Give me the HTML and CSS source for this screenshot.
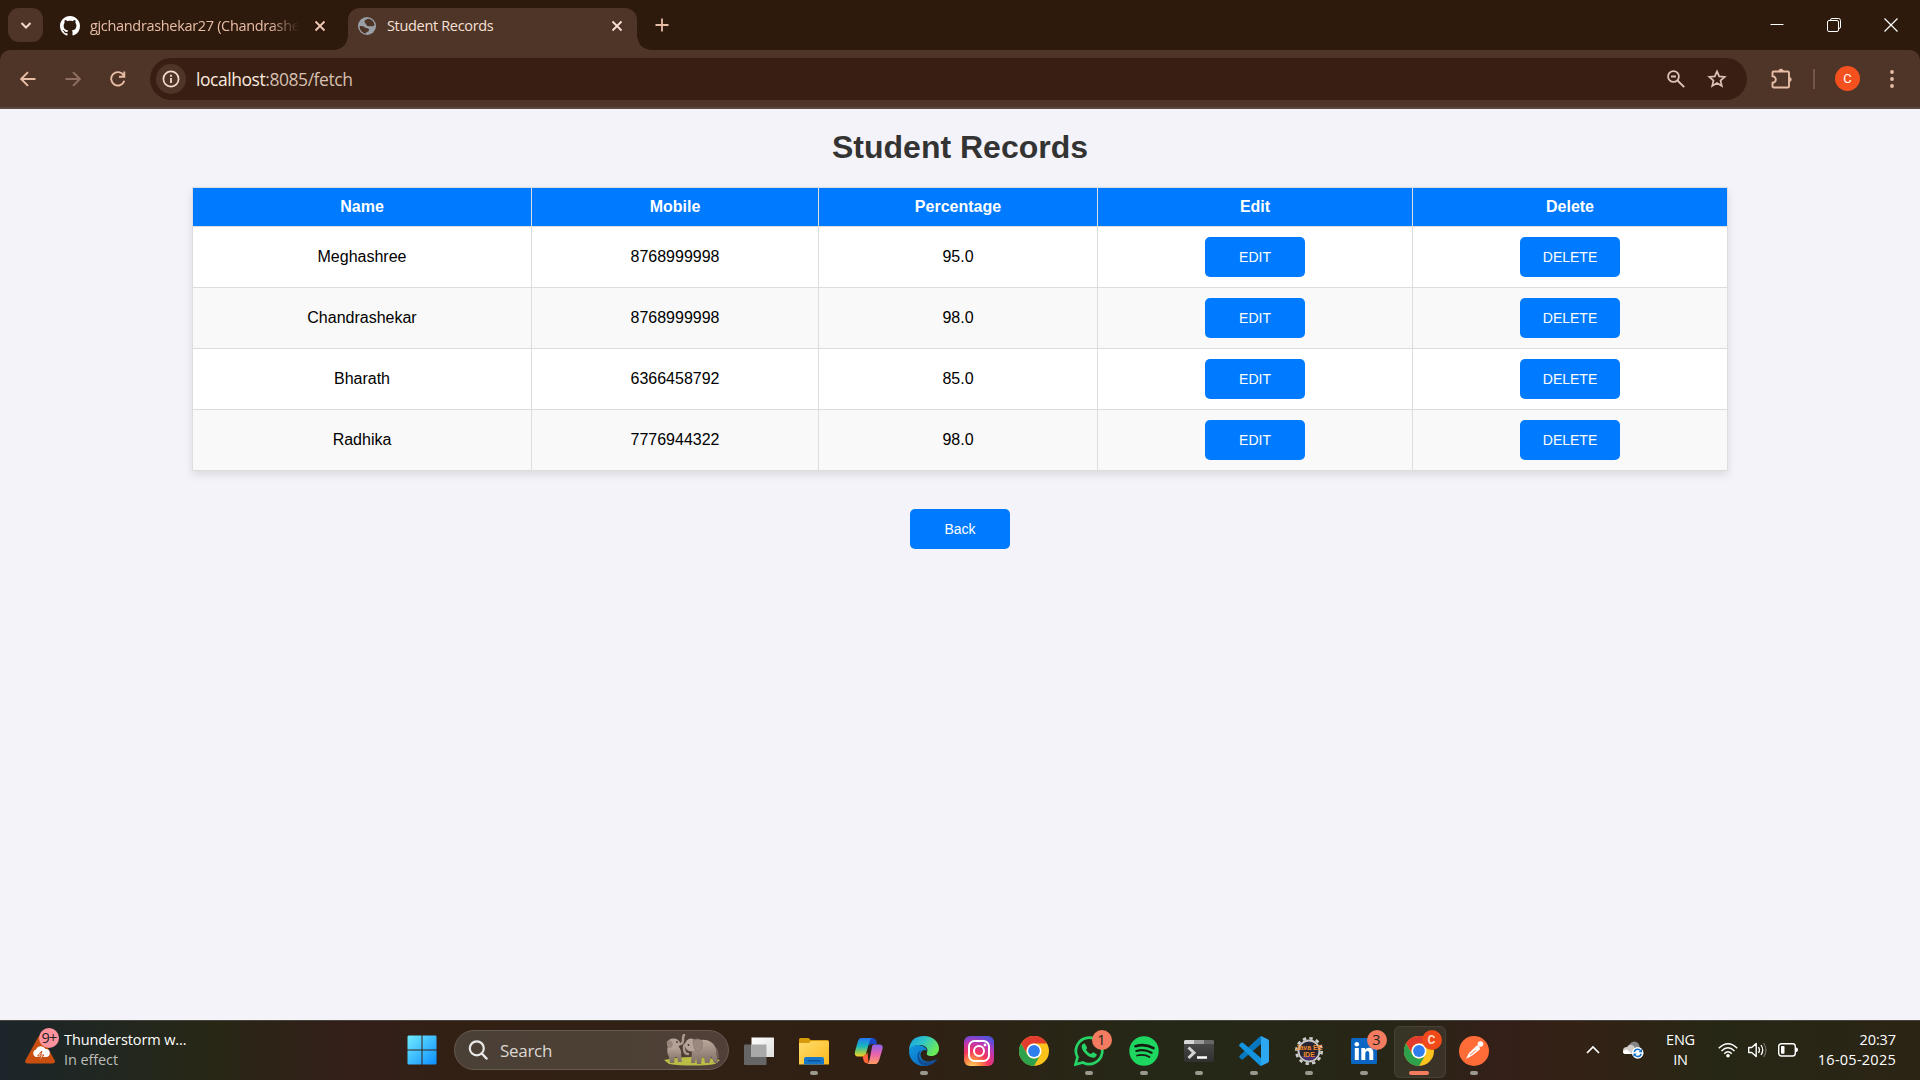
FILE: index.html
```html
<!DOCTYPE html>
<html lang="en">
<head>
<meta charset="utf-8">
<title>Student Records</title>
<link rel="stylesheet" href="styles.css">
</head>
<body>
<div class="screen">
<header class="tabstrip">
  <button class="tab-search"><svg width="12" height="12" viewBox="0 0 12 12"><path d="M1.500 4L6 8.500 10.500 4" fill="none" stroke="#f3dacb" stroke-width="2"/></svg></button>
  <div class="tab">
    <svg class="favicon github" width="20" height="20" viewBox="0 0 16 16"><path fill="#fff" d="M8 0C3.58 0 0 3.58 0 8c0 3.54 2.29 6.53 5.47 7.59.4.07.55-.17.55-.38 0-.19-.01-.82-.01-1.49-2.01.37-2.53-.49-2.69-.94-.09-.23-.48-.94-.82-1.13-.28-.15-.68-.52-.01-.53.63-.01 1.08.58 1.23.82.72 1.21 1.87.87 2.33.66.07-.52.28-.87.51-1.07-1.78-.2-3.64-.89-3.64-3.95 0-.87.31-1.59.82-2.15-.08-.2-.36-1.02.08-2.12 0 0 .67-.21 2.2.82.64-.18 1.32-.27 2-.27s1.36.09 2 .27c1.53-1.04 2.2-.82 2.2-.82.44 1.1.16 1.92.08 2.12.51.56.82 1.27.82 2.15 0 3.07-1.87 3.75-3.65 3.95.29.25.54.73.54 1.48 0 1.07-.01 1.93-.01 2.2 0 .21.15.46.55.38A8.01 8.01 0 0 0 16 8c0-4.42-3.58-8-8-8z"/></svg>
    <span class="tab-title faded">gjchandrashekar27 (Chandrashe</span>
    <svg class="close" width="12" height="12" viewBox="0 0 12 12"><path d="M1.500 1.500l9 9M10.500 1.500l-9 9" stroke="#f0c9b4" stroke-width="1.800"/></svg>
  </div>
  <div class="tab active">
    <svg class="favicon" width="18" height="18" viewBox="0 0 18 18"><circle cx="9" cy="9" r="9" fill="#9aa0a6"/><path d="M10 1.800c-1.500.8-3.500 1-3.500 2.700S8 6.500 8.500 8s2.500 1.300 4.500 1.300 3.500-.3 3.500-1.300C16 4.500 13.500 2 10 1.800zM1.600 9c0 4 2.400 7 6.400 7.500.3-1 .5-1.500 2-2s1.500-3-.5-3.300S7 11 6.500 10 3.500 9 1.600 9z" fill="#4f3527"/></svg>
    <span class="tab-title">Student Records</span>
    <svg class="close" width="12" height="12" viewBox="0 0 12 12"><path d="M1.500 1.500l9 9M10.500 1.500l-9 9" stroke="#f8e3d7" stroke-width="1.800"/></svg>
  </div>
  <svg class="new-tab" width="14" height="14" viewBox="0 0 14 14"><path d="M7 .5v13M.5 7h13" stroke="#e8bda6" stroke-width="1.800"/></svg>
  <div class="window-controls">
    <svg width="14" height="14" viewBox="0 0 14 14"><path d="M.5 6.500h13" stroke="#fff"/></svg>
    <svg width="14" height="14" viewBox="0 0 14 14"><path d="M3.500 2.500V2Q3.500.500 5 .500h6.500q2 0 2 2V9q0 1.500-1.500 1.500h-.5M.5 4q0-1.500 1.500-1.500h8q1.500 0 1.500 1.500v8q0 1.500-1.500 1.500H2Q.5 13.500.5 12z" fill="none" stroke="#fff"/></svg>
    <svg width="14" height="14" viewBox="0 0 14 14"><path d="M.5.5l13 13M13.500.5l-13 13" stroke="#fff" stroke-width="1.200"/></svg>
  </div>
</header>

<nav class="toolbar">
  <div class="nav-buttons">
    <svg width="16" height="16" viewBox="0 0 16 16"><path d="M15.500 8H1.500M8 1.200L1.200 8 8 14.800" fill="none" stroke="#e8bda6" stroke-width="1.900"/></svg>
    <svg width="16" height="16" viewBox="0 0 16 16"><path d="M.5 8h14M8 1.200L14.800 8 8 14.800" fill="none" stroke="#8f7060" stroke-width="1.900"/></svg>
    <svg width="16" height="16" viewBox="0 0 16 16"><path d="M13.600 4.300A6.700 6.700 0 1 0 14.300 9.800M14.300.5v5.200H9" fill="none" stroke="#e8bda6" stroke-width="1.900"/></svg>
  </div>
  <div class="omnibox">
    <span class="site-info"><svg width="18" height="18" viewBox="0 0 18 18"><circle cx="9" cy="9" r="7.600" fill="none" stroke="#f3dacb" stroke-width="1.700"/><path d="M9 8v5M9 4.800v1.900" stroke="#f3dacb" stroke-width="1.800"/></svg></span>
    <span class="url"><b>localhost</b>:8085/fetch</span>
    <span class="omni-actions">
      <svg width="18" height="18" viewBox="0 0 18 18"><circle cx="6.500" cy="6.500" r="5.400" fill="none" stroke="#dcc3b6" stroke-width="1.800"/><path d="M4 6.500h5M10.500 10.500l6.700 6.700" stroke="#dcc3b6" stroke-width="1.900"/></svg>
      <svg width="20" height="20" viewBox="0 0 20 20"><path d="M10 2.300l2.200 5.100 5.500.5-4.200 3.600 1.300 5.400L10 14l-4.800 2.900 1.300-5.400L2.300 7.900l5.500-.5z" fill="none" stroke="#dcc3b6" stroke-width="1.700"/></svg>
    </span>
  </div>
  <svg class="extensions" width="22" height="22" viewBox="0 0 22 22"><path d="M2.500 3.500h14.200q1.300 0 1.300 1.300v13.400q0 1.300-1.300 1.300H2.800q-1.300 0-1.300-1.300v-3.400a3.300 3.300 0 0 0 0-6.600V4.500q0-1 1-1z" fill="none" stroke="#e8bda6" stroke-width="1.900"/><path d="M7.500 3.200a2.500 2.500 0 0 1 5 0zM18.200 9a2.500 2.500 0 0 1 0 5z" fill="#e8bda6"/></svg>
  <span class="divider"></span>
  <span class="avatar">C</span>
  <svg class="menu" width="4" height="18" viewBox="0 0 4 18"><g fill="#e8bda6"><circle cx="2" cy="2" r="1.900"/><circle cx="2" cy="9" r="1.900"/><circle cx="2" cy="16" r="1.900"/></g></svg>
</nav>

<main class="page">
  <h1>Student Records</h1>
  <table>
    <colgroup><col class="c-name"><col class="c-mobile"><col class="c-percent"><col class="c-edit"><col class="c-delete"></colgroup>
    <thead><tr><th>Name</th><th>Mobile</th><th>Percentage</th><th>Edit</th><th>Delete</th></tr></thead>
    <tbody>
      <tr><td>Meghashree</td><td>8768999998</td><td>95.0</td><td><button class="btn">EDIT</button></td><td><button class="btn">DELETE</button></td></tr>
      <tr><td>Chandrashekar</td><td>8768999998</td><td>98.0</td><td><button class="btn">EDIT</button></td><td><button class="btn">DELETE</button></td></tr>
      <tr><td>Bharath</td><td>6366458792</td><td>85.0</td><td><button class="btn">EDIT</button></td><td><button class="btn">DELETE</button></td></tr>
      <tr><td>Radhika</td><td>7776944322</td><td>98.0</td><td><button class="btn">EDIT</button></td><td><button class="btn">DELETE</button></td></tr>
    </tbody>
  </table>
  <button class="btn back">Back</button>
</main>

<footer class="taskbar">
  <div class="weather">
    <span class="weather-icon">
      <svg width="34" height="36" viewBox="0 0 34 36"><path d="M13.200 9Q15 6 16.800 9l12.700 23q1.500 3.500-2 3.500h-25Q-1 35.500.6 32z" fill="#c94f10"/><path d="M10.500 29a4 4 0 0 1 .5-7.500 5.200 5.200 0 0 1 9.500-.5 4 4 0 0 1 .5 8z" fill="#fff"/><path d="M17 23l-4.500 5h3.500l-2 5 5-6h-3.500z" fill="#fff" stroke="#c94f10" stroke-width="1"/></svg>
      <span class="badge pink">9+</span>
    </span>
    <div class="weather-text"><span>Thunderstorm w...</span><small>In effect</small></div>
  </div>

  <svg class="start" width="30" height="30" viewBox="0 0 30 30"><defs><linearGradient id="win" x1="0" y1="0" x2="30" y2="30" gradientUnits="userSpaceOnUse"><stop stop-color="#72edff"/><stop offset="1" stop-color="#0a8cff"/></linearGradient></defs><path d="M1.500.5H14.500v14H.5v-13zM15.500.5h13q1 0 1 1v13h-14zM.5 15.500H14.500v14H1.500q-1 0-1-1zM15.500 15.500h14v13q0 1-1 1h-13z" fill="url(#win)"/></svg>

  <div class="search">
    <svg width="20" height="20" viewBox="0 0 20 20"><circle cx="8.800" cy="8.300" r="7" fill="none" stroke="#e8e8e8" stroke-width="2.200"/><path d="M13.800 13.500l4.700 5" stroke="#e8e8e8" stroke-width="2.500" stroke-linecap="round"/></svg>
    <span>Search</span>
    <svg class="elephants" width="56" height="32" viewBox="0 0 56 32">
      <defs><linearGradient id="ele" x1="0" y1="0" x2="0" y2="1"><stop stop-color="#bba89d"/><stop offset="1" stop-color="#7d6c63"/></linearGradient></defs>
      <path d="M0 26q12-3 28-3t28 3l-5 4q-8 1.500-22 1.500T5 30z" fill="#b9bd45"/>
      <path d="M4 12q-2 6 1 11l1 6h4l1-6h2l1 5h4l-1-7q1-5-3-9z" fill="url(#ele)"/>
      <path d="M13 10q6 1 6-3.500t1-5.500" fill="none" stroke="#ab988d" stroke-width="2.500" stroke-linecap="round"/>
      <ellipse cx="9.500" cy="9.500" rx="6.500" ry="5" fill="#b5a297"/>
      <path d="M3 7q5-2 6 3-1 5-4 4-3-2-2-7z" fill="#97857b"/>
      <path d="M33 7q8-3 14 1 6 4 5.500 12l1.500 9h-4l-3-7-1.500 7H41l-1-6h-2l-1 7h-4l-1-6-1 5h-4l1-12z" fill="url(#ele)"/>
      <path d="M23 13q-3-5-3 1t4 6" fill="none" stroke="#ab988d" stroke-width="2.500" stroke-linecap="round"/>
      <ellipse cx="27" cy="11" rx="6" ry="6.500" fill="#b7a499"/>
      <path d="M29 6q7-3 9.500 2 0 9-5 10-4-2-4.500-12z" fill="#9b887e" stroke="#85736a" stroke-width=".6"/>
      <path d="M52 14q2.500 5 2 10" stroke="#85736a" stroke-width="1" fill="none"/>
      <circle cx="13" cy="8" r=".9" fill="#43313c"/><circle cx="24.500" cy="11" r=".9" fill="#43313c"/>
    </svg>
  </div>

  <div class="apps">
    <div class="app"><svg width="30" height="30" viewBox="0 0 30 30"><defs><linearGradient id="tvw" x1="0" y1="0" x2="1" y2="1"><stop stop-color="#fff"/><stop offset="1" stop-color="#dedede"/></linearGradient></defs><path d="M0 9.500q0-1 1-1h21.500V28q0 1-1 1H1q-1 0-1-1z" fill="#666"/><path d="M7.500 1.500h22q.5 0 .5.500v19H8q-.5 0-.5-.5z" fill="url(#tvw)"/><path d="M7.500 8.500h15V21h-15z" fill="#a9a9a9"/></svg></div>
    <div class="app running"><svg width="30" height="30" viewBox="0 0 30 30"><defs><linearGradient id="fold" x1="0" y1="0" x2="1" y2="1"><stop stop-color="#ffdc6c"/><stop offset="1" stop-color="#fbb91e"/></linearGradient></defs><path d="M0 3.500Q0 2 1.500 2H9q1.500 0 2.500 2h17q1.500 0 1.500 1.500V12H0z" fill="#d79a0c"/><path d="M0 7h10l2-2h16.500q1.500 0 1.500 1.500V28.500H0z" fill="url(#fold)"/><path d="M5 28.500V23q0-2 2-2h16q2 0 2 2v5.500z" fill="#1677c9"/><path d="M8.500 24.800h13" stroke="#0b4d91" stroke-width="1.300"/></svg></div>
    <div class="app"><svg width="30" height="30" viewBox="0 0 30 30"><defs><linearGradient id="cop1" x1="0" y1="0" x2="0" y2="1"><stop stop-color="#2477f2"/><stop offset=".45" stop-color="#19b8bd"/><stop offset=".75" stop-color="#8ccd56"/><stop offset="1" stop-color="#ffd126"/></linearGradient><linearGradient id="cop2" x1="0" y1="0" x2="0" y2="1"><stop stop-color="#8d63ed"/><stop offset=".5" stop-color="#ea63ad"/><stop offset="1" stop-color="#ff9b60"/></linearGradient></defs><path d="M14 2h5q2.500 0 3.200 2.500L23 8h-5q-2 0-3 2z" fill="#1848c9"/><path d="M7.500 2H18q-2 1-2.700 4l-3.200 11.500Q11 20.500 8 20.500H4Q0 20.500 1 15.500L4 5q1-3 3.500-3z" fill="url(#cop1)"/><path d="M8.500 20q4-1 5-4l1 11q-4 1-5-3z" fill="#ff6538"/><path d="M19 8.500h6.500q4 0 3 4.500L25.500 23q-1.500 5-4 5H13q2-1 2.500-4L18 11q.5-2 1-2.500z" fill="url(#cop2)"/></svg></div>
    <div class="app running"><svg width="30" height="30" viewBox="0 0 30 30"><defs><linearGradient id="edg" x1="0" y1="0" x2="1" y2=".5"><stop stop-color="#149fe5"/><stop offset=".5" stop-color="#31c5c5"/><stop offset="1" stop-color="#6bea57"/></linearGradient><linearGradient id="edg2" x1="0" y1="0" x2="1" y2="1"><stop stop-color="#129be4"/><stop offset="1" stop-color="#0860b5"/></linearGradient></defs><path d="M0 14Q1 0 15 0c9 0 15 6 15 12.500 0 5-4 7.500-7.500 7.500-4 0-5.500-1.500-4.500-3.500 2-5-3-7.500-7-7.500Q4 9 0 14z" fill="url(#edg)"/><path d="M0 15q1-6 9-6c6 0 9 4 9 6-3-3-8 1-6 6 2 6 10 5 13 3q-4 6-10 6C6 30 0 23 0 15z" fill="url(#edg2)"/><path d="M12.500 14q-5 6 0 10.500 5 4 14-1 2-1 1 .8Q23 30 16 30 8 28 8.500 20q0-4 4-6z" fill="#124c94"/></svg></div>
    <div class="app"><svg width="30" height="30" viewBox="0 0 30 30"><defs><radialGradient id="ins" cx=".28" cy="1.050" r="1.100"><stop stop-color="#ffdc72"/><stop offset=".25" stop-color="#fe8a42"/><stop offset=".5" stop-color="#f33461"/><stop offset=".78" stop-color="#b937b7"/><stop offset="1" stop-color="#5751dc"/></radialGradient></defs><rect width="30" height="30" rx="6" fill="url(#ins)"/><rect x="5" y="5" width="20" height="20" rx="5.500" fill="none" stroke="#fff" stroke-width="2"/><circle cx="15" cy="15" r="5" fill="none" stroke="#fff" stroke-width="2"/><circle cx="21" cy="9" r="1.400" fill="#fff"/></svg></div>
    <div class="app"><svg width="30" height="30" viewBox="0 0 30 30"><g id="chrome"><circle cx="15" cy="15" r="15" fill="#fcc31d"/><path d="M2 7.500A15 15 0 0 1 28 7.500H15a7.500 7.500 0 0 0-6.500 11.250z" fill="#e33b2e"/><path d="M2 7.500l6.500 11.250A7.500 7.500 0 0 0 21.500 18.750L15 30A15 15 0 0 1 2 7.500z" fill="#2da14c"/><circle cx="15" cy="15" r="7.500" fill="#fff"/><circle cx="15" cy="15" r="5.900" fill="#307ded"/></g></svg></div>
    <div class="app running"><svg width="30" height="30" viewBox="0 0 30 30"><path d="M1.500 28.500l2-7.300A13.200 13.200 0 1 1 8.800 26.500z" fill="none" stroke="#25d366" stroke-width="2.700"/><path d="M10.800 7.500q-1-.4-2 .6c-2 2-1 5 1 7.700 3 4.200 7 6.200 10 5.900 2-.3 3-2 3-3.400l-3.600-2q-.8 0-2 1.700c-3-.9-4.500-3-5.200-4.300q1.500-1.200 1-2.200z" fill="#25d366"/></svg><span class="badge">1</span></div>
    <div class="app running"><svg width="30" height="30" viewBox="0 0 30 30"><circle cx="15" cy="15" r="14.700" fill="#1ed760"/><g fill="none" stroke="#171c12" stroke-linecap="round"><path d="M6.500 10.200q9.500-2.700 18 1.900" stroke-width="2.700"/><path d="M7.300 15q8-2.200 15.300 1.700" stroke-width="2.200"/><path d="M8 19.500q7-1.700 12.500 1.500" stroke-width="1.800"/></g></svg></div>
    <div class="app running"><svg width="30" height="30" viewBox="0 0 30 30"><defs><linearGradient id="term" x1="0" y1="0" x2="0" y2="1"><stop stop-color="#4d4d4d"/><stop offset="1" stop-color="#303030"/></linearGradient></defs><rect y="4" width="30" height="22" rx="1.500" fill="url(#term)"/><path d="M0 8V5.500Q0 4 1.500 4H10v4z" fill="#d5d5d5"/><path d="M10 4h10v4H10z" fill="#999"/><path d="M20 4h8.500Q30 4 30 5.500V8H20z" fill="#666"/><path d="M4.500 11.500l5.500 5.200L4.500 22" fill="none" stroke="#d3d3d3" stroke-width="3"/><path d="M13 21.500h10" stroke="#fff" stroke-width="2.500"/></svg></div>
    <div class="app running"><svg width="30" height="30" viewBox="0 0 30 30"><path d="M22 0v8L4 23.200q-1 .6-1.800 0L.5 21.500q-.8-1 0-1.800L20.500.8Q21.300 0 22 0z" fill="#0877bd"/><path d="M22 30v-8L4 6.800q-1-.6-1.800 0L.5 8.500q-.8 1 0 1.800l20 18.900q.8.8 1.500.8z" fill="#1493df"/><path d="M22 0l6.800 3.200Q30 4 30 5v20q0 1-1.200 1.800L22 30z" fill="#2ca7f0"/></svg></div>
    <div class="app running"><svg class="eclipse" width="30" height="30" viewBox="0 0 30 30"><circle cx="15" cy="15" r="12.700" fill="none" stroke="#cfcfcf" stroke-width="2.600" stroke-dasharray="3.400 3.250"/><circle cx="15" cy="15" r="10.500" fill="#29242f" stroke="#c5c5c5" stroke-width="1.900"/><path d="M7.500 20h15q-2 4-7.500 4t-7.500-4z" fill="#493078"/><text x="15" y="13.800" class="ee">Java EE</text><text x="15" y="20.500" class="ee">IDE</text></svg></div>
    <div class="app running"><svg width="30" height="30" viewBox="0 0 30 30"><rect x="2" y="2" width="26" height="26" rx="1.500" fill="#0a66c2"/><path d="M5.800 12h4v12h-4zM12.300 12h3.800v1.700q1.200-2 3.900-2 4.300 0 4.300 5.300v7h-4v-6.300q0-2.800-1.900-2.800-2.100 0-2.100 3V24h-4z" fill="#fff"/><circle cx="7.800" cy="8.300" r="2.300" fill="#fff"/></svg><span class="badge">3</span></div>
    <div class="app running current"><svg width="30" height="30" viewBox="0 0 30 30"><use href="#chrome"/></svg><span class="badge profile">C</span></div>
    <div class="app running"><svg width="30" height="30" viewBox="0 0 30 30"><circle cx="15" cy="15" r="15" fill="#ff6c37"/><circle cx="21.500" cy="8" r="2.800" fill="#fff"/><path d="M17.500 9.800q1.200-.6 2.500.8t.8 2.800L13 19.700l-6 3 3-5.600z" fill="#fff"/><path d="M17 14l-6 5" stroke="#ff6c37" stroke-width=".9"/></svg></div>
  </div>

  <div class="tray">
    <svg class="chevron" width="14" height="10" viewBox="0 0 14 10"><path d="M1 8l6-6 6 6" fill="none" stroke="#fff" stroke-width="1.700"/></svg>
    <svg class="cloud" width="21" height="18" viewBox="0 0 21 18"><path d="M5 9q0-7.500 6-8.500 5.500 0 6 7v3H5z" fill="#858585"/><path d="M3 13q-3 0-3-3.500T4 6q2-3 5-2 3 1 3 5l1 4z" fill="#d0cdca"/><path d="M0 11q0-2 4-2.500l5 4.500H3q-3 0-3-2z" fill="#fff"/><circle cx="14.700" cy="11.900" r="5.800" fill="#fff"/><path d="M11.200 11q.8-2.800 3.500-2.800 1.800 0 3.100 1.700M18.200 12.800q-.8 2.800-3.500 2.800-1.800 0-3.100-1.700" fill="none" stroke="#1373cc" stroke-width="1.500"/><path d="M19 7.800v3.400h-3.400zM10.400 16v-3.400h3.400z" fill="#1373cc"/></svg>
    <div class="lang"><span>ENG</span><span>IN</span></div>
    <svg class="wifi" width="20" height="16" viewBox="0 0 20 16"><g fill="none" stroke="#fff" stroke-width="1.400"><path d="M.7 6.200Q10-2.800 19.300 6.200M3.500 9q6.500-6.400 13 0M6.200 11.700q3.800-3.700 7.600 0"/></g><circle cx="10" cy="13.700" r="1.800" fill="#fff"/></svg>
    <svg class="volume" width="20" height="18" viewBox="0 0 20 18"><path d="M.7 6.500v5h3l4.500 4V2.500l-4.500 4z" fill="none" stroke="#fff" stroke-width="1.400" stroke-linejoin="round"/><path d="M10.500 6q2 3 0 6M13 4q3.500 5 0 10" fill="none" stroke="#fff" stroke-width="1.300"/><path d="M15.500 2q5 7 0 14" fill="none" stroke="#777165" stroke-width="1.200"/></svg>
    <svg class="battery" width="20" height="14" viewBox="0 0 20 14"><rect x=".7" y=".7" width="16.600" height="12.300" rx="2.700" fill="none" stroke="#fff" stroke-width="1.400"/><rect x="3" y="3" width="3.500" height="7.700" rx=".8" fill="#fff"/><path d="M18 4.500q2 0 2 2.300T18 9z" fill="#fff"/></svg>
    <div class="clock"><span class="time">20:37</span><span class="date">16-05-2025</span></div>
  </div>
</footer>
</div>
</body>
</html>
```
FILE: styles.css
```css
* { box-sizing: border-box; }
body { margin: 0; font-family: "Liberation Sans", Arial, sans-serif; }
svg { display: block; flex: none; }
button { border: 0; padding: 0; }
.screen { width: 1920px; height: 1080px; display: flex; flex-direction: column; overflow: hidden; background: #2e1a0d; }
.tabstrip, .toolbar, .taskbar { font-family: "Open Sans", "Noto Sans", sans-serif; white-space: nowrap; }

/* Tab strip */
.tabstrip { height: 50px; flex: none; display: flex; align-items: center; padding-left: 8px; background: #2e1a0d; }
.tab-search { width: 35px; height: 34px; border-radius: 11px; background: #4f3527; display: grid; place-items: center; }
.tab { width: 289px; height: 42px; align-self: flex-end; display: flex; align-items: center; padding: 0 14px 7px 10px; margin-left: 16px; color: #e8bda6; font-size: 14.5px; letter-spacing: -0.33px; }
.tab .github { margin-left: -9px; }
.tab-title { flex: 1; margin-left: 11px; }
.tab-title.faded { flex: none; margin-left: 10px; width: 209px; -webkit-mask-image: linear-gradient(90deg, #000 86%, transparent); mask-image: linear-gradient(90deg, #000 86%, transparent); }
.faded + .close { margin-left: 15px; }
.tab.active { position: relative; margin-left: 0; background: #4f3527; color: #f6e0d4; border-radius: 12px 12px 0 0; }
.tab.active::before, .tab.active::after { content: ""; position: absolute; bottom: 0; width: 14px; height: 14px; }
.tab.active::before { left: -14px; background: radial-gradient(circle at 0 0, transparent 13.5px, #4f3527 14px); }
.tab.active::after { right: -14px; background: radial-gradient(circle at 100% 0, transparent 13.5px, #4f3527 14px); }
.new-tab { margin-left: 18px; }
.window-controls { margin: 0 22px 0 auto; display: flex; gap: 43px; }

/* Toolbar */
.toolbar { height: 59px; flex: none; display: flex; align-items: center; padding: 0 26px 0 20px; background: #4f3527; border-radius: 10px 10px 0 0; border-bottom: 2px solid #5c483f; }
.nav-buttons { width: 130px; display: flex; gap: 29px; }
.omnibox { flex: 1; height: 42px; margin-right: 24px; display: flex; align-items: center; padding: 0 20px 0 6px; border-radius: 21px; background: #372013; }
.site-info { width: 30px; height: 30px; border-radius: 50%; background: #4f3527; display: grid; place-items: center; }
.url { margin-left: 10px; font-size: 17.5px; letter-spacing: -0.45px; color: #d8bfb1; }
.url b { font-weight: 400; color: #fbe9df; }
.omni-actions { margin-left: auto; display: flex; align-items: center; gap: 22px; }
.divider { width: 2px; height: 20px; margin: 0 20px; background: #725547; }
.avatar { width: 25px; height: 25px; border-radius: 50%; background: #f5511e; color: #fff; font: 13px Roboto, sans-serif; display: grid; place-items: center; }
.menu { margin-left: 30px; }

/* Student records page */
.page { height: 911px; flex: none; background: #f4f3f9; display: flex; flex-direction: column; align-items: center; padding-top: 20px; }
h1 { margin: 0; font-size: 32px; line-height: 36px; color: #333; }
table { width: 1536px; margin-top: 22px; table-layout: fixed; border-collapse: collapse; background: #fff; text-align: center; font-size: 16px; box-shadow: 0 4px 8px rgba(0, 0, 0, .1); }
.c-name { width: 339px; }
.c-mobile { width: 287px; }
.c-percent { width: 279px; }
.c-edit, .c-delete { width: 315px; }
th, td { border: 1px solid #ddd; padding: 10px; }
th { height: 39px; background: #007bff; color: #fff; line-height: 18px; }
td { height: 61px; }
tbody tr:nth-child(even) { background: #f9f9f9; }
.btn { display: block; width: 100px; height: 40px; margin: 0 auto; border-radius: 5px; background: #007bff; color: #fff; font: 14px "Liberation Sans", Arial, sans-serif; }
.back { margin-top: 38px; }

/* Taskbar */
.taskbar { height: 60px; flex: none; display: flex; align-items: center; padding-bottom: 1px; border-top: 1px solid #48453f; color: #fff; background: linear-gradient(90deg, #1b252a 0, #202722 90px, #282716 210px, #341f19 350px, #322015 450px, #302014 900px, #282616 1080px, #252817 1160px, #282616 1400px, #341f19 1500px, #342115 1570px, #272716 1720px, #2b2415 1920px); }
.weather { width: 407px; display: flex; padding-left: 25px; align-items: center; }
.weather-icon { position: relative; width: 34px; height: 36px; margin-top: -8px; }
.weather-text { margin-left: 5px; display: flex; flex-direction: column; font-size: 14.5px; line-height: 20px; letter-spacing: -0.1px; }
.weather-text small { font-size: 14.5px; color: #bdbdb8; }
.badge { position: absolute; width: 20px; height: 20px; border-radius: 50%; background: #f27b60; color: #222; font-size: 14.5px; line-height: 20px; text-align: center; }
.badge.pink { left: 14px; top: 0; background: #ff929c; letter-spacing: -0.8px; }
.search { width: 275px; height: 40px; margin-left: 17px; display: flex; align-items: center; padding: 0 8px 0 13px; border: 1px solid #665a50; border-radius: 20px; background: linear-gradient(90deg, #4b4036, #4c4034 60%, #514039); color: #dcd8d3; font-size: 17px; letter-spacing: -0.3px; }
.search span { margin-left: 12px; }
.elephants { margin-left: auto; }
.apps { display: flex; margin-left: 2.5px; }
.app { position: relative; width: 55px; height: 49px; display: flex; justify-content: center; padding-top: 10px; }
.app .badge { left: 30px; top: 4px; }
.app.running::after { content: ""; position: absolute; left: 23.5px; bottom: 0; width: 8px; height: 4px; border-radius: 2px; background: #9b9890; }
.app.current::before { content: ""; position: absolute; left: 2.5px; top: 0; width: 50px; height: 50px; border-radius: 6px; background: rgba(255, 255, 255, .07); border: 1px solid rgba(255, 255, 255, .07); }
.app.current::after { left: 17.5px; width: 20px; background: #f27b60; }
.app.current svg { position: relative; }
.app .profile { background: #f04a1a; color: #ffd8c8; font: 700 12px/20px Roboto, sans-serif; }
.eclipse { overflow: visible; }
.ee { font: 700 7px "Liberation Sans", Arial, sans-serif; fill: #f68b27; text-anchor: middle; }
.tray { flex: 1; display: flex; align-items: center; margin-right: 24px; font-size: 14.5px; line-height: 20px; letter-spacing: -0.2px; }
.chevron { margin-left: 84px; }
.cloud { margin-left: 23px; }
.lang { width: 38px; margin-left: 18px; display: flex; flex-direction: column; align-items: center; }
.wifi { margin-left: 18px; }
.volume { margin-left: 10px; }
.battery { margin-left: 10px; }
.clock { margin-left: auto; display: flex; flex-direction: column; align-items: flex-end; letter-spacing: 0.25px; }
.time { letter-spacing: -0.1px; }
```
